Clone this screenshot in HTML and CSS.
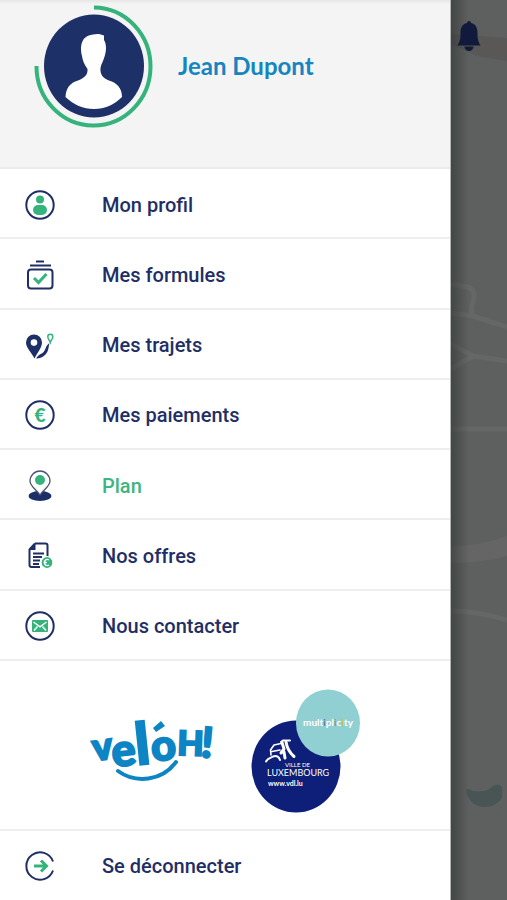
FILE: index.html
```html
<!DOCTYPE html>
<html lang="fr">
<head>
<meta charset="utf-8">
<meta name="viewport" content="width=device-width, initial-scale=1">
<title>Menu</title>
<link rel="stylesheet" href="styles.css">
</head>
<body>
<div class="app">
  <div class="drawer">
    <header class="profile">
      <svg class="avatar" viewBox="0 0 120 124" aria-hidden="true">
        <path d="M60 3.500A57 59 0 1 1 2.500 62" fill="none" stroke="#35b37c" stroke-width="4"/>
        <ellipse cx="60" cy="62" rx="50" ry="51.500" fill="#1d3068"/>
        <path d="M59 30.500C63 29.500 67 30 70 31.500V36C72.500 40 72.500 46 71 51C70 56 67 60 66.500 64C66 71 69 74 75 76.500C83 79 88 84 88 93C80 101 71 105 60 105C49 105 40 101 31.500 93C32 84 36 79 44 76.500C51 74 54 70 53.500 65C50 60 48.500 56 48 52C46 43 46.500 32 59 30.500Z" fill="#fff"/>
      </svg>
      <h1 class="name">Jean Dupont</h1>
    </header>

    <nav class="menu" aria-label="Menu principal">
      <a class="item" href="#profil">
        <svg class="icon" viewBox="0 0 32 32" aria-hidden="true">
          <circle class="line" cx="16" cy="16" r="13.700"/>
          <circle class="green" cx="16" cy="10.500" r="4"/>
          <rect class="green" x="9" y="16" width="14" height="10" rx="5"/>
        </svg>
        <span>Mon profil</span>
      </a>
      <a class="item" href="#formules">
        <svg class="icon" viewBox="0 0 32 32" aria-hidden="true">
          <path class="line" d="M12 2.500h8M6 6.500h21"/>
          <rect class="line" x="4" y="10.500" width="24.500" height="19" rx="3"/>
          <path class="mark" d="M10 19l4.500 4.500 8-8.500"/>
        </svg>
        <span>Mes formules</span>
      </a>
      <a class="item" href="#trajets">
        <svg class="icon" viewBox="0 0 32 32" aria-hidden="true">
          <path class="navy" fill-rule="evenodd" d="M10 5.500a8 8 0 0 1 8 8C18 19 13 24 10.500 29.500C8 24 2 19 2 13.500a8 8 0 0 1 8-8zM10 10.300a3.300 3.300 0 1 0 0 6.600a3.300 3.300 0 0 0 0-6.600z"/>
          <path class="navy" d="M12 29.500C14 26 16 25.500 18.500 24C22 21.500 21 17 25.500 14C24.500 17 25 22 21.500 25.500C19 28 16 29.500 12 29.500z"/>
          <path fill="none" stroke="#35b37c" stroke-width="1.500" d="M26.300 13.500C25.500 11 23.800 10 23.800 7.800a2.500 2.500 0 0 1 5 0C28.800 10 27 11 26.300 13.500z"/>
        </svg>
        <span>Mes trajets</span>
      </a>
      <a class="item" href="#paiements">
        <svg class="icon" viewBox="0 0 32 32" aria-hidden="true">
          <circle class="line" cx="16" cy="16" r="13.700"/>
          <text class="euro" x="16" y="23" text-anchor="middle">€</text>
        </svg>
        <span>Mes paiements</span>
      </a>
      <a class="item current" href="#plan" aria-current="page">
        <svg class="icon" viewBox="0 0 32 32" aria-hidden="true">
          <ellipse class="navy" cx="16" cy="26" rx="11.500" ry="5"/>
          <path d="M16 1C21.500 1 26 5.500 26 11C26 16.500 19 20 16 25C13 20 6 16.500 6 11C6 5.500 10.500 1 16 1z" fill="#fff" stroke="#4a5371" stroke-width="1.300"/>
          <circle class="green" cx="16" cy="10" r="5"/>
        </svg>
        <span>Plan</span>
      </a>
      <a class="item" href="#offres">
        <svg class="icon" viewBox="0 0 32 32" aria-hidden="true">
          <path class="line" d="M11 3.500h10.500a2 2 0 0 1 2 2V17M16 27H7.500a2 2 0 0 1-2-2V9.500L11 3.500"/>
          <path class="navy" d="M5 10L11.500 3v7z"/>
          <path class="line" d="M9 13.500h11M9 17h9M9 20.500h7M9 24h6"/>
          <circle cx="23" cy="22.500" r="6" fill="#35b37c" stroke="#fff" stroke-width="1.200"/>
          <path d="M25 20a3 3 0 1 0 0 5M19.800 22.500h3" fill="none" stroke="#fff" stroke-width="1.300"/>
        </svg>
        <span>Nos offres</span>
      </a>
      <a class="item" href="#contact">
        <svg class="icon" viewBox="0 0 32 32" aria-hidden="true">
          <circle class="line" cx="16" cy="16" r="13.700"/>
          <rect class="green" x="8" y="10" width="16" height="12" rx="1"/>
          <path d="M9.500 12l6.500 4.800 6.500-4.800M10 20.500l3.500-4M22 20.500l-3.500-4" fill="none" stroke="#fff" stroke-width="1.400"/>
        </svg>
        <span>Nous contacter</span>
      </a>
    </nav>

    <div class="logos">
      <svg class="veloh" viewBox="0 -3 130 72" role="img" aria-label="vel'oh!">
        <g class="veloh-text">
          <text transform="translate(6 44) rotate(-8)" font-size="38">v</text>
          <text transform="translate(25 50) rotate(-6)" font-size="45">e</text>
          <text transform="translate(49 48) rotate(-6)" font-size="58">l</text>
          <text transform="translate(64 44) rotate(-4)" font-size="43">o</text>
          <text transform="translate(89 38) rotate(2)" font-size="34">H</text>
          <text transform="translate(112 40) rotate(5)" font-size="42">!</text>
        </g>
        <path d="M65 11l8-7 4 5-9 6z" fill="#0d84c3"/>
        <path d="M30 54C48 67 74 64 88 45" fill="none" stroke="#0d84c3" stroke-width="4" stroke-linecap="round"/>
      </svg>
      <svg class="partners" viewBox="0 0 112 128" role="img" aria-label="Ville de Luxembourg, multiplicity">
        <ellipse cx="46" cy="80.500" rx="44.500" ry="46" fill="#0d1f78"/>
        <ellipse cx="78" cy="37" rx="32" ry="33.500" fill="#91d0d2"/>
        <g fill="none" stroke="#fff" stroke-linecap="round" stroke-linejoin="round">
          <path stroke-width="2" d="M16 75.500C18 72 21 72 23 70.500C27 69 29 71 30 74"/>
          <path stroke-width="1.600" d="M21 69L20.500 64L24 59L31 57.500M22 65.500L30 64"/>
          <path stroke-width="3" d="M32 56.500L34 63L31 67M36 56C37 62 40 67 44 70.500M34 66L35 72"/>
          <path stroke-width="2" d="M31 56L33 54.500H40"/>
        </g>
        <g class="partner-text">
          <text x="35" y="81" font-size="6">VILLE DE</text>
          <text x="17" y="90" font-size="9">LUXEMBOURG</text>
          <text x="18" y="100" font-size="7" font-weight="700">www.vdl.lu</text>
          <text x="78" y="40" font-size="10" font-weight="700" text-anchor="middle">mult<tspan fill="#7b6f93">i</tspan>pl<tspan fill="#c77d76">i</tspan>c<tspan fill="#d4bf3c">i</tspan>ty</text>
        </g>
      </svg>
    </div>

    <a class="item logout" href="#deconnexion">
      <svg class="icon" viewBox="0 0 32 32" aria-hidden="true">
        <path class="line" d="M29 11.500A13.700 13.700 0 1 0 29 20.500"/>
        <path class="mark" d="M10 16h12M17 10.500l5.500 5.500-5.500 5.500"/>
      </svg>
      <span>Se déconnecter</span>
    </a>
  </div>

  <aside class="map">
    <svg class="roads" viewBox="0 0 56 900" preserveAspectRatio="xMinYMin slice" aria-hidden="true">
      <path d="M0 34L56 38V61L26 56L0 44z" fill="#595857"/>
      <g fill="none" stroke="#656666" stroke-width="5">
        <path d="M0 284L16 287Q26 290 22 302Q19 309 22 317"/>
        <path d="M0 313L22 316L56 327"/>
        <path d="M0 344L22 356L56 361"/>
        <path d="M0 369L22 356"/>
        <path d="M0 429H56"/>
        <path d="M0 611Q26 611 56 620"/>
      </g>
      <path d="M0 546Q30 546 56 536V556Q30 563 0 563z" fill="#656565"/>
      <path d="M15 790Q18 788 22 791Q36 793 42 786Q48 782 51 788V798Q45 807 33 807Q18 806 15 790z" fill="#485554"/>
    </svg>
    <button class="bell" type="button" aria-label="Notifications">
      <svg viewBox="0 0 24 30" aria-hidden="true">
        <path d="M10 2a2 2 0 0 1 4 0C19 3 20.500 7 20.500 12C20.500 18 21 20 23.500 24.500H.5C3 20 3.500 18 3.500 12C3.500 7 5 3 10 2z" fill="#111a3b"/>
        <path d="M7.500 25.500h9a4.500 4.500 0 0 1-9 0z" fill="#111a3b"/>
      </svg>
    </button>
  </aside>
</div>
</body>
</html>
```
FILE: styles.css
```css
* {
  box-sizing: border-box;
}

body {
  margin: 0;
  font-family: Roboto, "Liberation Sans", sans-serif;
  color: #1f2f66;
  background: #5d605e;
}

.app {
  display: grid;
  grid-template-columns: 451fr 56fr;
  min-height: 100vh;
}

.drawer {
  display: flex;
  flex-direction: column;
  background: #fff;
  border-right: 1px solid #b5b7b6;
}

.profile {
  display: flex;
  align-items: flex-start;
  gap: 24px;
  height: 169px;
  padding: 4px 24px 0 34px;
  background: linear-gradient(#e6e6e6, #f4f4f4 4px);
  border-bottom: 2px solid #ebebeb;
}

.avatar {
  flex: none;
  width: 120px;
  height: 124px;
}

.name {
  margin: 0;
  font: 700 24px/124px Lato, "Liberation Sans", sans-serif;
  color: #1585c0;
}

.menu {
  flex: 1;
  display: flex;
  flex-direction: column;
}

.item {
  display: flex;
  flex: 1;
  align-items: center;
  gap: 46px;
  min-height: 69px;
  padding: 3px 24px 0;
  border-bottom: 2px solid #eeeeee;
  font-size: 20px;
  font-weight: 500;
  color: inherit;
  text-decoration: none;
}

.current {
  color: #3eb581;
}

.icon {
  flex: none;
  width: 32px;
  height: 32px;
}

.line {
  fill: none;
  stroke: #1f2f66;
  stroke-width: 2;
  stroke-linejoin: round;
}

.navy {
  fill: #1d2f69;
}

.green {
  fill: #35b37c;
}

.mark {
  fill: none;
  stroke: #35b37c;
  stroke-width: 3;
}

.euro {
  font: 900 19px Lato, sans-serif;
  fill: #35b37c;
}

.logos {
  display: flex;
  align-items: center;
  justify-content: center;
  gap: 32px;
  height: 170px;
  padding-top: 10px;
  border-bottom: 2px solid #eeeeee;
}

.veloh {
  width: 130px;
  height: 72px;
  overflow: visible;
}

.veloh-text {
  font-family: Lato, "Liberation Sans", sans-serif;
  font-weight: 900;
  fill: #0d84c3;
  stroke: #0d84c3;
  stroke-width: 2;
}

.partners {
  width: 112px;
  height: 128px;
}

.partner-text {
  font-family: Lato, "Liberation Sans", sans-serif;
  font-variant-ligatures: none;
  fill: #fff;
}

.logout {
  flex: none;
  padding-top: 0;
  border-bottom: 0;
}

.map {
  position: relative;
  overflow: hidden;
  background: #5d605e;
}

.map::after {
  content: "";
  position: absolute;
  inset: 0 auto 0 0;
  width: 18px;
  background: linear-gradient(90deg, rgba(40, 44, 42, 0.5), rgba(40, 44, 42, 0));
}

.roads {
  position: absolute;
  inset: 0;
  width: 100%;
  height: 100%;
}

.bell {
  position: absolute;
  z-index: 1;
  top: 21px;
  left: 6px;
  width: 24px;
  height: 30px;
  padding: 0;
  border: 0;
  background: none;
}

.bell svg {
  display: block;
}
```
